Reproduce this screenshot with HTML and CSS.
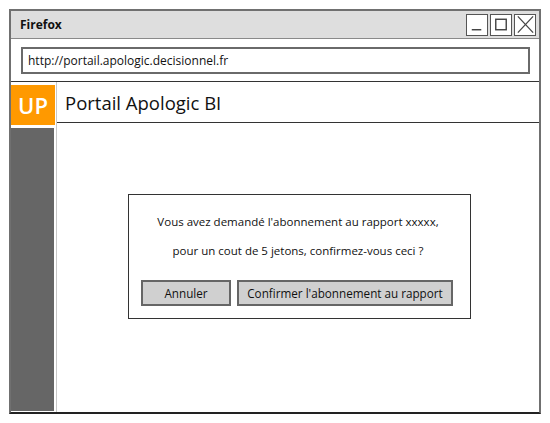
FILE: index.html
```html
<!DOCTYPE html>
<html lang="fr">
<head>
<meta charset="utf-8">
<title>Portail Apologic BI</title>
<link rel="stylesheet" href="styles.css">
</head>
<body>
<div class="window">
  <div class="titlebar">
    <span class="title">Firefox</span>
    <div class="controls">
      <span class="ctl"><svg width="21" height="21" viewBox="0 0 21 21"><line x1="5" y1="16" x2="15" y2="16" stroke="#444" stroke-width="1.5"/></svg></span>
      <span class="ctl"><svg width="21" height="21" viewBox="0 0 21 21"><rect x="5" y="5" width="11" height="11" fill="none" stroke="#444" stroke-width="1.5"/></svg></span>
      <span class="ctl"><svg width="21" height="21" viewBox="0 0 21 21"><line x1="3" y1="2" x2="19" y2="19" stroke="#444" stroke-width="1.3"/><line x1="19" y1="2" x2="3" y2="19" stroke="#444" stroke-width="1.3"/></svg></span>
    </div>
  </div>
  <div class="urlrow">
    <div class="url">http://portail.apologic.decisionnel.fr</div>
  </div>
  <div class="app">
    <div class="side">
      <div class="logo">UP</div>
      <div class="nav"></div>
    </div>
    <div class="content">
      <div class="header">Portail Apologic BI</div>
      <div class="main">
        <div class="dialog">
          <p class="msg">Vous avez demandé l'abonnement au rapport xxxxx,</p>
          <p class="msg">pour un cout de 5 jetons, confirmez-vous ceci ?</p>
          <div class="actions">
            <button class="btn btn-cancel">Annuler</button>
            <button class="btn btn-ok">Confirmer l'abonnement au rapport</button>
          </div>
        </div>
      </div>
    </div>
  </div>
</div>
</body>
</html>
```
FILE: styles.css
```css
* { box-sizing: border-box; }
html, body { margin: 0; padding: 0; background: #fff; }
body { font-family: "Open Sans", "Liberation Sans", sans-serif; color: #111; }

.window {
  margin: 9px 0 0 9px;
  width: 532px;
  height: 405px;
  border: 2px solid #707070;
  border-bottom-color: #222;
  display: flex;
  flex-direction: column;
  background: #fff;
}

.titlebar {
  height: 28px;
  background: #dedede;
  border-bottom: 1px solid #8a8a8a;
  display: flex;
  align-items: center;
  justify-content: space-between;
  padding: 0 3px 0 9px;
}
.title { font-size: 12px; font-weight: 700; color: #111; }
.controls { display: flex; gap: 2px; }
.ctl {
  width: 22px; height: 22px;
  border: 1.5px solid #555;
  background: #fff;
  display: flex; align-items: center; justify-content: center;
}

.urlrow {
  padding: 8px 9px 7px 10px;
  border-bottom: 1px solid #333;
}
.url {
  height: 27px;
  border: 2px solid #6a6a6a;
  font-size: 12px;
  line-height: 23px;
  padding-left: 5px;
  color: #111;
}

.app { flex: 1; display: flex; min-height: 0; }
.side {
  width: 45px;
  display: flex;
  flex-direction: column;
  padding: 3px 0 0 0;
}
.logo {
  height: 40px;
  width: 44px;
  background: #ff9900;
  color: #fff;
  font-size: 22px;
  font-weight: 600;
  display: flex; align-items: center; justify-content: center;
}
.nav {
  flex: 1;
  width: 43px;
  margin-top: 3px;
  margin-bottom: 1px;
  background: #666;
}

.content {
  flex: 1;
  display: flex;
  flex-direction: column;
  border-left: 1px solid #c8c8c8;
}
.header {
  height: 41px;
  border-bottom: 1px solid #333;
  font-size: 18.5px;
  padding: 8px 0 0 8px;
  color: #111;
}
.main { flex: 1; padding: 71px 0 0 71px; }

.dialog {
  width: 343px;
  height: 125px;
  border: 1px solid #333;
  padding: 12px 15px 0 12px;
}
.msg {
  margin: 0;
  text-align: center;
  font-size: 11.5px;
  line-height: 29px;
}
.actions { display: flex; gap: 6px; margin-top: 15px; }
.btn {
  font-family: inherit;
  font-size: 11.7px;
  color: #111;
  height: 26px;
  background: #d0d0d0;
  border: 2px solid #666;
  padding: 0;
}
.btn-cancel { width: 90px; }
.btn-ok { width: 216px; }
```
